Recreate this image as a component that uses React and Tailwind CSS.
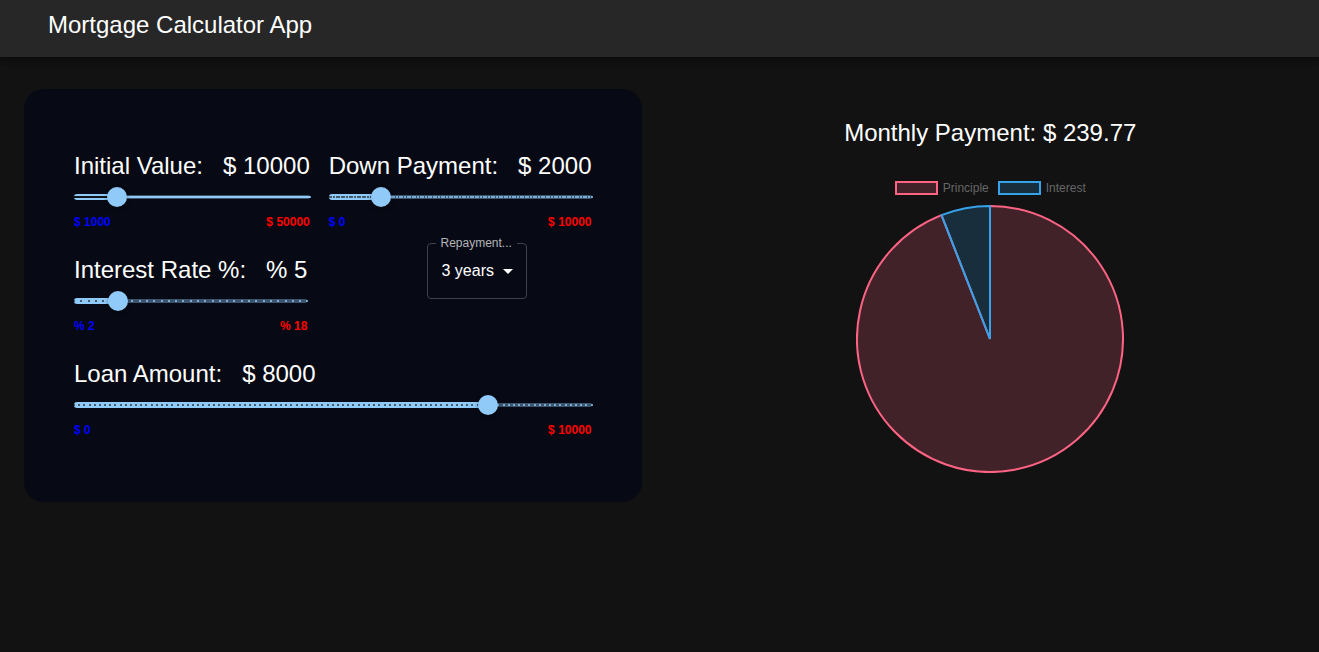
import { useState } from 'react';

function Slider({ id, label, unit, value, min, max, step, onChange }) {
  const percent = ((value - min) / (max - min)) * 100;
  const count = Math.round((max - min) / step);
  const marks = Array.from({ length: count + 1 }, (_, i) => (i / count) * 100);

  return (
    <div className="py-[11px]">
      <div className="flex gap-5 text-2xl leading-8 whitespace-nowrap">
        <label htmlFor={id}>{label}</label>
        <output htmlFor={id}>{unit} {value}</output>
      </div>
      <div className="relative flex h-[30px] items-center text-[#90caf9]">
        <span className="h-1 w-full rounded-full bg-current opacity-[0.38]" />
        <span className="absolute left-0 h-1.5 rounded-full bg-current" style={{ width: `${percent}%` }} />
        {marks.map((left) => (
          <span
            key={left}
            className={
              left <= percent
                ? 'absolute top-3.5 h-0.5 w-0.5 -translate-x-px rounded-[1px] bg-[#121212] opacity-80'
                : 'absolute top-3.5 h-0.5 w-0.5 -translate-x-px rounded-[1px] bg-current'
            }
            style={{ left: `${left}%` }}
          />
        ))}
        <span
          className="absolute h-5 w-5 -translate-x-1/2 rounded-full bg-current shadow-[0_2px_4px_rgba(0,0,0,0.4)]"
          style={{ left: `${percent}%` }}
        />
        <input
          id={id}
          type="range"
          className="absolute inset-0 h-full w-full cursor-pointer opacity-0"
          min={min}
          max={max}
          step={step}
          value={value}
          onChange={(e) => onChange(Number(e.target.value))}
        />
      </div>
      <div className="flex justify-between text-xs leading-5 font-bold">
        <span className="text-[#0000ff]">{unit} {min}</span>
        <span className="text-[#ff0000]">{unit} {max}</span>
      </div>
    </div>
  );
}

function TermSelect({ value, onChange }) {
  return (
    <div className="relative mr-[65px] ml-auto h-14 w-[100px] rounded border border-[#404149]">
      <label
        htmlFor="term"
        className="absolute -top-[11px] left-2 bg-[#070a14] px-[5px] text-xs leading-5 text-[#b4b5b8]"
      >
        Repayment...
      </label>
      <select
        id="term"
        className="h-full w-full cursor-pointer appearance-none bg-transparent pl-3.5 text-base text-white outline-none"
        value={value}
        onChange={(e) => onChange(Number(e.target.value))}
      >
        {[1, 2, 3, 4, 5].map((years) => (
          <option key={years} value={years} className="bg-[#272727]">
            {years} years
          </option>
        ))}
      </select>
      <svg
        viewBox="0 0 24 24"
        className="pointer-events-none absolute top-[15px] right-1.5 h-6 w-6 fill-white"
        aria-hidden="true"
      >
        <path d="M7 10l5 5 5-5z" />
      </svg>
    </div>
  );
}

function PieChart({ principle, interest }) {
  const angle = (2 * Math.PI * interest) / (principle + interest);
  const r = 133;
  const c = 134;
  const x = c - r * Math.sin(angle);
  const y = c - r * Math.cos(angle);
  const large = angle > Math.PI ? 1 : 0;

  return (
    <div className="flex flex-col items-center gap-2.5">
      <ul className="flex items-center gap-[9px] text-xs leading-3 text-[#666666]">
        <li className="flex items-center gap-[5px]">
          <span className="h-3.5 w-[43px] border-2 border-[#ff6384] bg-[#ff6384]/20" />
          Principle
        </li>
        <li className="flex items-center gap-[5px]">
          <span className="h-3.5 w-[43px] border-2 border-[#36a2eb] bg-[#36a2eb]/20" />
          Interest
        </li>
      </ul>
      <svg viewBox="0 0 268 268" className="h-[268px] w-[268px]" strokeWidth="2" strokeLinejoin="bevel">
        <path
          d={`M${c} ${c}V${c - r}A${r} ${r} 0 ${1 - large} 1 ${x} ${y}Z`}
          fill="#ff6384"
          fillOpacity="0.2"
          stroke="#ff6384"
        />
        <path
          d={`M${c} ${c}L${x} ${y}A${r} ${r} 0 ${large} 1 ${c} ${c - r}Z`}
          fill="#36a2eb"
          fillOpacity="0.2"
          stroke="#36a2eb"
        />
      </svg>
    </div>
  );
}

export default function App() {
  const [home, setHome] = useState(10000);
  const [down, setDown] = useState(2000);
  const [loan, setLoan] = useState(8000);
  const [rate, setRate] = useState(5);
  const [term, setTerm] = useState(3);

  const months = term * 12;
  const monthlyRate = rate / 1200;
  const growth = (1 + monthlyRate) ** months;
  const payment = (loan * monthlyRate * growth) / (growth - 1);
  const interest = payment * months - loan;

  const changeHome = (value) => {
    const nextDown = Math.round(value * 0.2);
    setHome(value);
    setDown(nextDown);
    setLoan(value - nextDown);
  };
  const changeDown = (value) => {
    setDown(value);
    setLoan(home - value);
  };
  const changeLoan = (value) => {
    setLoan(value);
    setDown(home - value);
  };

  return (
    <div className="min-h-screen bg-[#121212] font-['Liberation_Sans',Arial,sans-serif] text-white">
      <header className="bg-[#272727] px-12 pt-[9px] pb-4 shadow-[0_2px_4px_-1px_rgba(0,0,0,0.2),0_4px_5px_rgba(0,0,0,0.14),0_1px_10px_rgba(0,0,0,0.12)]">
        <h1 className="text-2xl leading-8">Mortgage Calculator App</h1>
      </header>
      <main className="grid grid-cols-2 items-start pt-8">
        <div className="pr-[18px] pl-6">
          <section className="rounded-[20px] bg-[#070a14] px-[50px] pt-[50px] pb-[51px]">
            <div className="flex justify-between">
              <Slider id="home" label="Initial Value:" unit="$" value={home} min={1000} max={50000} step={100} onChange={changeHome} />
              <Slider id="down" label="Down Payment:" unit="$" value={down} min={0} max={home} step={100} onChange={changeDown} />
            </div>
            <div className="flex items-start">
              <Slider id="rate" label="Interest Rate %:" unit="%" value={rate} min={2} max={18} step={0.5} onChange={setRate} />
              <TermSelect value={term} onChange={setTerm} />
            </div>
            <Slider id="loan" label="Loan Amount:" unit="$" value={loan} min={0} max={home} step={100} onChange={changeLoan} />
          </section>
        </div>
        <section className="flex flex-col items-center gap-8 pt-7 pl-0.5">
          <h2 className="text-2xl leading-8">Monthly Payment: $ {payment.toFixed(2)}</h2>
          <PieChart principle={home} interest={interest} />
        </section>
      </main>
    </div>
  );
}
